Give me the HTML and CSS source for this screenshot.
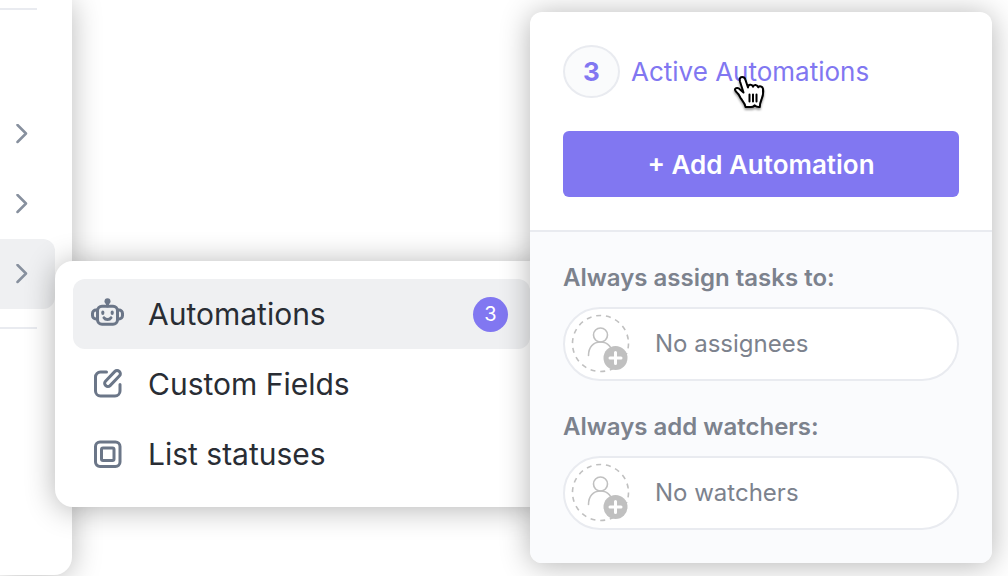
FILE: index.html
```html
<!DOCTYPE html>
<html lang="en">

<head>
    <meta charset="UTF-8">
    <meta name="viewport" content="width=device-width, initial-scale=1.0">
    <link rel="stylesheet" href="styles.css">
    <title>Automations</title>
</head>

<body>
    <nav class="sidebar" aria-label="List menu">
        <hr>
        <div class="sidebar-rows">
            <button class="sidebar-row" aria-label="Open submenu">
                <svg class="chevron" viewBox="0 0 12 20"><path d="M1.5 1 10 9.500 1.500 18" /></svg>
            </button>
            <button class="sidebar-row" aria-label="Open submenu">
                <svg class="chevron" viewBox="0 0 12 20"><path d="M1.5 1 10 9.500 1.500 18" /></svg>
            </button>
            <button class="sidebar-row active" aria-label="Open submenu">
                <svg class="chevron" viewBox="0 0 12 20"><path d="M1.5 1 10 9.500 1.500 18" /></svg>
            </button>
        </div>
        <hr>
    </nav>

    <div class="submenu">
        <button class="submenu-item active">
            <svg class="item-icon" viewBox="0 0 34 34">
                <rect x="6.500" y="9.200" width="20" height="18" rx="4.500" />
                <path d="M16.500 9V5M6.500 13H5a3.500 3.500 0 0 0-3.500 3.500v2A3.500 3.500 0 0 0 5 22h1.500M26.500 13H28a3.500 3.500 0 0 1 3.500 3.500v2A3.500 3.500 0 0 1 28 22h-1.500M13 20.800c1.500 2.400 5.500 2.400 7 0" />
                <circle class="solid" cx="16.500" cy="4.300" r="3" />
                <ellipse class="solid" cx="11.800" cy="15.700" rx="1.600" ry="2.200" />
                <ellipse class="solid" cx="21.200" cy="15.700" rx="1.600" ry="2.200" />
            </svg>
            <span>Automations</span>
            <span class="badge">3</span>
        </button>
        <button class="submenu-item">
            <svg class="item-icon" viewBox="0 0 34 34">
                <path d="M15.500 5H9.500a5 5 0 0 0-5 5v14a5 5 0 0 0 5 5h14.500a5 5 0 0 0 5-5V17.500" />
                <rect x="-9.800" y="-3.200" width="19.600" height="6.400" rx="3" transform="translate(21.500 11.500) rotate(-46)" />
            </svg>
            <span>Custom Fields</span>
        </button>
        <button class="submenu-item">
            <svg class="item-icon" viewBox="0 0 34 34">
                <rect x="4.500" y="5" width="24.500" height="24.500" rx="4.500" />
                <rect x="10.500" y="11" width="12.500" height="12.500" rx="1.500" />
            </svg>
            <span>List statuses</span>
        </button>
    </div>

    <div class="popover">
        <div class="popover-top">
            <a class="active-link" href="#">
                <span class="count">3</span>
                <span>Active Automations</span>
            </a>
            <svg class="cursor" viewBox="0 0 34 38">
                <path d="M11.500 20.500 8 9.500C7 6 8.800 5 10.300 5c1.600 0 2.500.8 3 2.500l2.700 8c0-3.300 4.200-3.500 5-.8.700-2.600 4.400-2.400 5.200.6 1.300-1.800 4.300-1 4.800 1.500.7 4-.1 7.200-1.500 10.700-1 2.300-1.700 4.500-1.700 7.500-1.900.3-3.500-.2-5.300-1.700-1.300 1.700-2.700 2-4.500 1.700h-4.500c-.4-3.300-2.500-5.500-4.500-8.300-1.300-2-1.700-3.700-3.200-5.200-1.500-1.600-3.300-3-2.800-4.300.8-1.800 3.500-1.300 5 .2l3.500 3.100Z" />
                <path d="M17.500 22.500v7M21 22.500v7M24.500 22.500v7" />
            </svg>
            <button class="add-button">+ Add Automation</button>
        </div>
        <div class="popover-bottom">
            <div class="field">
                <span class="field-label" id="assign-label">Always assign tasks to:</span>
                <button class="people" aria-labelledby="assign-label assign-value">
                    <svg class="avatar" viewBox="0 0 60 60">
                        <circle class="ring" cx="29.500" cy="29.500" r="28" />
                        <circle cx="29.500" cy="21" r="7" />
                        <path d="M17.500 41.500c0-8 4.500-13.500 12-13.500s12 5.500 12 13.500" />
                        <circle class="plus-bg" cx="44.500" cy="44" r="12" />
                        <path class="plus" d="M39 44h11M44.500 38.500v11" />
                    </svg>
                    <span id="assign-value">No assignees</span>
                </button>
            </div>
            <div class="field">
                <span class="field-label" id="watch-label">Always add watchers:</span>
                <button class="people" aria-labelledby="watch-label watch-value">
                    <svg class="avatar" viewBox="0 0 60 60">
                        <circle class="ring" cx="29.500" cy="29.500" r="28" />
                        <circle cx="29.500" cy="21" r="7" />
                        <path d="M17.500 41.500c0-8 4.500-13.500 12-13.500s12 5.500 12 13.500" />
                        <circle class="plus-bg" cx="44.500" cy="44" r="12" />
                        <path class="plus" d="M39 44h11M44.500 38.500v11" />
                    </svg>
                    <span id="watch-value">No watchers</span>
                </button>
            </div>
        </div>
    </div>
</body>

</html>
```

FILE: styles.css
```css
* {
    box-sizing: border-box;
}

body {
    margin: 0;
    min-height: 100vh;
    overflow: hidden;
    background-color: #fff;
    font-family: Inter, "Liberation Sans", sans-serif;
    color: #292d34;
}

button {
    border: 0;
    margin: 0;
    padding: 0;
    background: none;
    font: inherit;
    color: inherit;
    cursor: pointer;
}

svg {
    display: block;
    flex-shrink: 0;
    fill: none;
    stroke-linecap: round;
    stroke-linejoin: round;
}

/* sidebar */
.sidebar {
    width: 72px;
    min-height: calc(100vh - 1px);
    padding-top: 8px;
    border-radius: 0 0 18px 0;
    background-color: #fff;
    box-shadow: 0 2px 30px rgba(0, 0, 0, 0.28);
}

.sidebar hr {
    width: 37px;
    height: 2px;
    margin: 0;
    border: 0;
    background-color: #e9ebf0;
}

.sidebar-rows {
    padding: 89px 0 18px;
}

.sidebar-row {
    display: flex;
    align-items: center;
    justify-content: flex-end;
    width: 55px;
    height: 70px;
    padding-right: 27px;
    border-radius: 0 12px 12px 0;
}

.chevron {
    width: 12px;
    height: 20px;
    stroke: #87909e;
    stroke-width: 2.5;
}

.sidebar-row.active,
.submenu-item.active {
    background-color: #eff0f2;
}

/* submenu */
.submenu {
    position: absolute;
    top: 261px;
    left: 55px;
    width: 493px;
    padding: 18px;
    border-radius: 18px;
    background-color: #fff;
    box-shadow: 0 2px 30px rgba(0, 0, 0, 0.3);
}

.submenu-item {
    display: flex;
    align-items: center;
    gap: 23px;
    width: 100%;
    height: 70px;
    padding: 0 22px 0 18px;
    border-radius: 12px;
    font-size: 30px;
}

.item-icon {
    width: 34px;
    height: 34px;
    stroke: #6b7688;
    stroke-width: 3;
}

.item-icon .solid {
    fill: #6b7688;
    stroke: none;
}

.badge {
    width: 35px;
    margin-left: auto;
    border-radius: 50%;
    background-color: #8177f1;
    color: #fff;
    font-size: 20px;
    line-height: 35px;
}

/* popover */
.popover {
    position: absolute;
    top: 12px;
    right: 16px;
    width: 462px;
    border-radius: 12px;
    background-color: #fff;
    box-shadow: 0 2px 30px rgba(0, 0, 0, 0.3);
}

.popover-top {
    position: relative;
    padding: 33px;
    border-bottom: 2px solid #e9ebf0;
}

.active-link {
    display: flex;
    align-items: center;
    gap: 11px;
    margin-bottom: 33px;
    color: #8177f1;
    font-size: 26px;
    text-decoration: none;
}

.count {
    width: 57px;
    border: 2px solid #e9ebf0;
    border-radius: 50%;
    background-color: #fafbfc;
    font-weight: 700;
    line-height: 49px;
    text-align: center;
}

.cursor {
    position: absolute;
    top: 60px;
    left: 202px;
    width: 34px;
    height: 38px;
    fill: #fff;
    stroke: #000;
    stroke-width: 2;
    filter: drop-shadow(0 2px 1px rgba(0, 0, 0, 0.4));
}

.add-button {
    width: 100%;
    height: 66px;
    border-radius: 6px;
    background-color: #8177f1;
    color: #fff;
    font-size: 26px;
    font-weight: 600;
}

.popover-bottom {
    display: flex;
    flex-direction: column;
    gap: 33px;
    padding: 33px;
    border-radius: 0 0 12px 12px;
    background-color: #fafbfd;
    color: #7c828d;
    font-size: 24px;
    line-height: 26px;
}

.field {
    display: flex;
    flex-direction: column;
    gap: 16px;
}

.field-label {
    font-weight: 600;
}

.people {
    display: flex;
    align-items: center;
    gap: 24px;
    height: 74px;
    padding-left: 6px;
    border: 2px solid #e9ebf0;
    border-radius: 37px;
    background-color: #fff;
}

.avatar {
    width: 60px;
    height: 60px;
    stroke: #c0c0c0;
    stroke-width: 1.6;
}

.avatar .ring {
    stroke-dasharray: 5 4.8;
    stroke-linecap: butt;
}

.avatar .plus-bg {
    fill: #c0c0c0;
    stroke: none;
}

.avatar .plus {
    stroke: #fff;
    stroke-width: 3;
}
```
